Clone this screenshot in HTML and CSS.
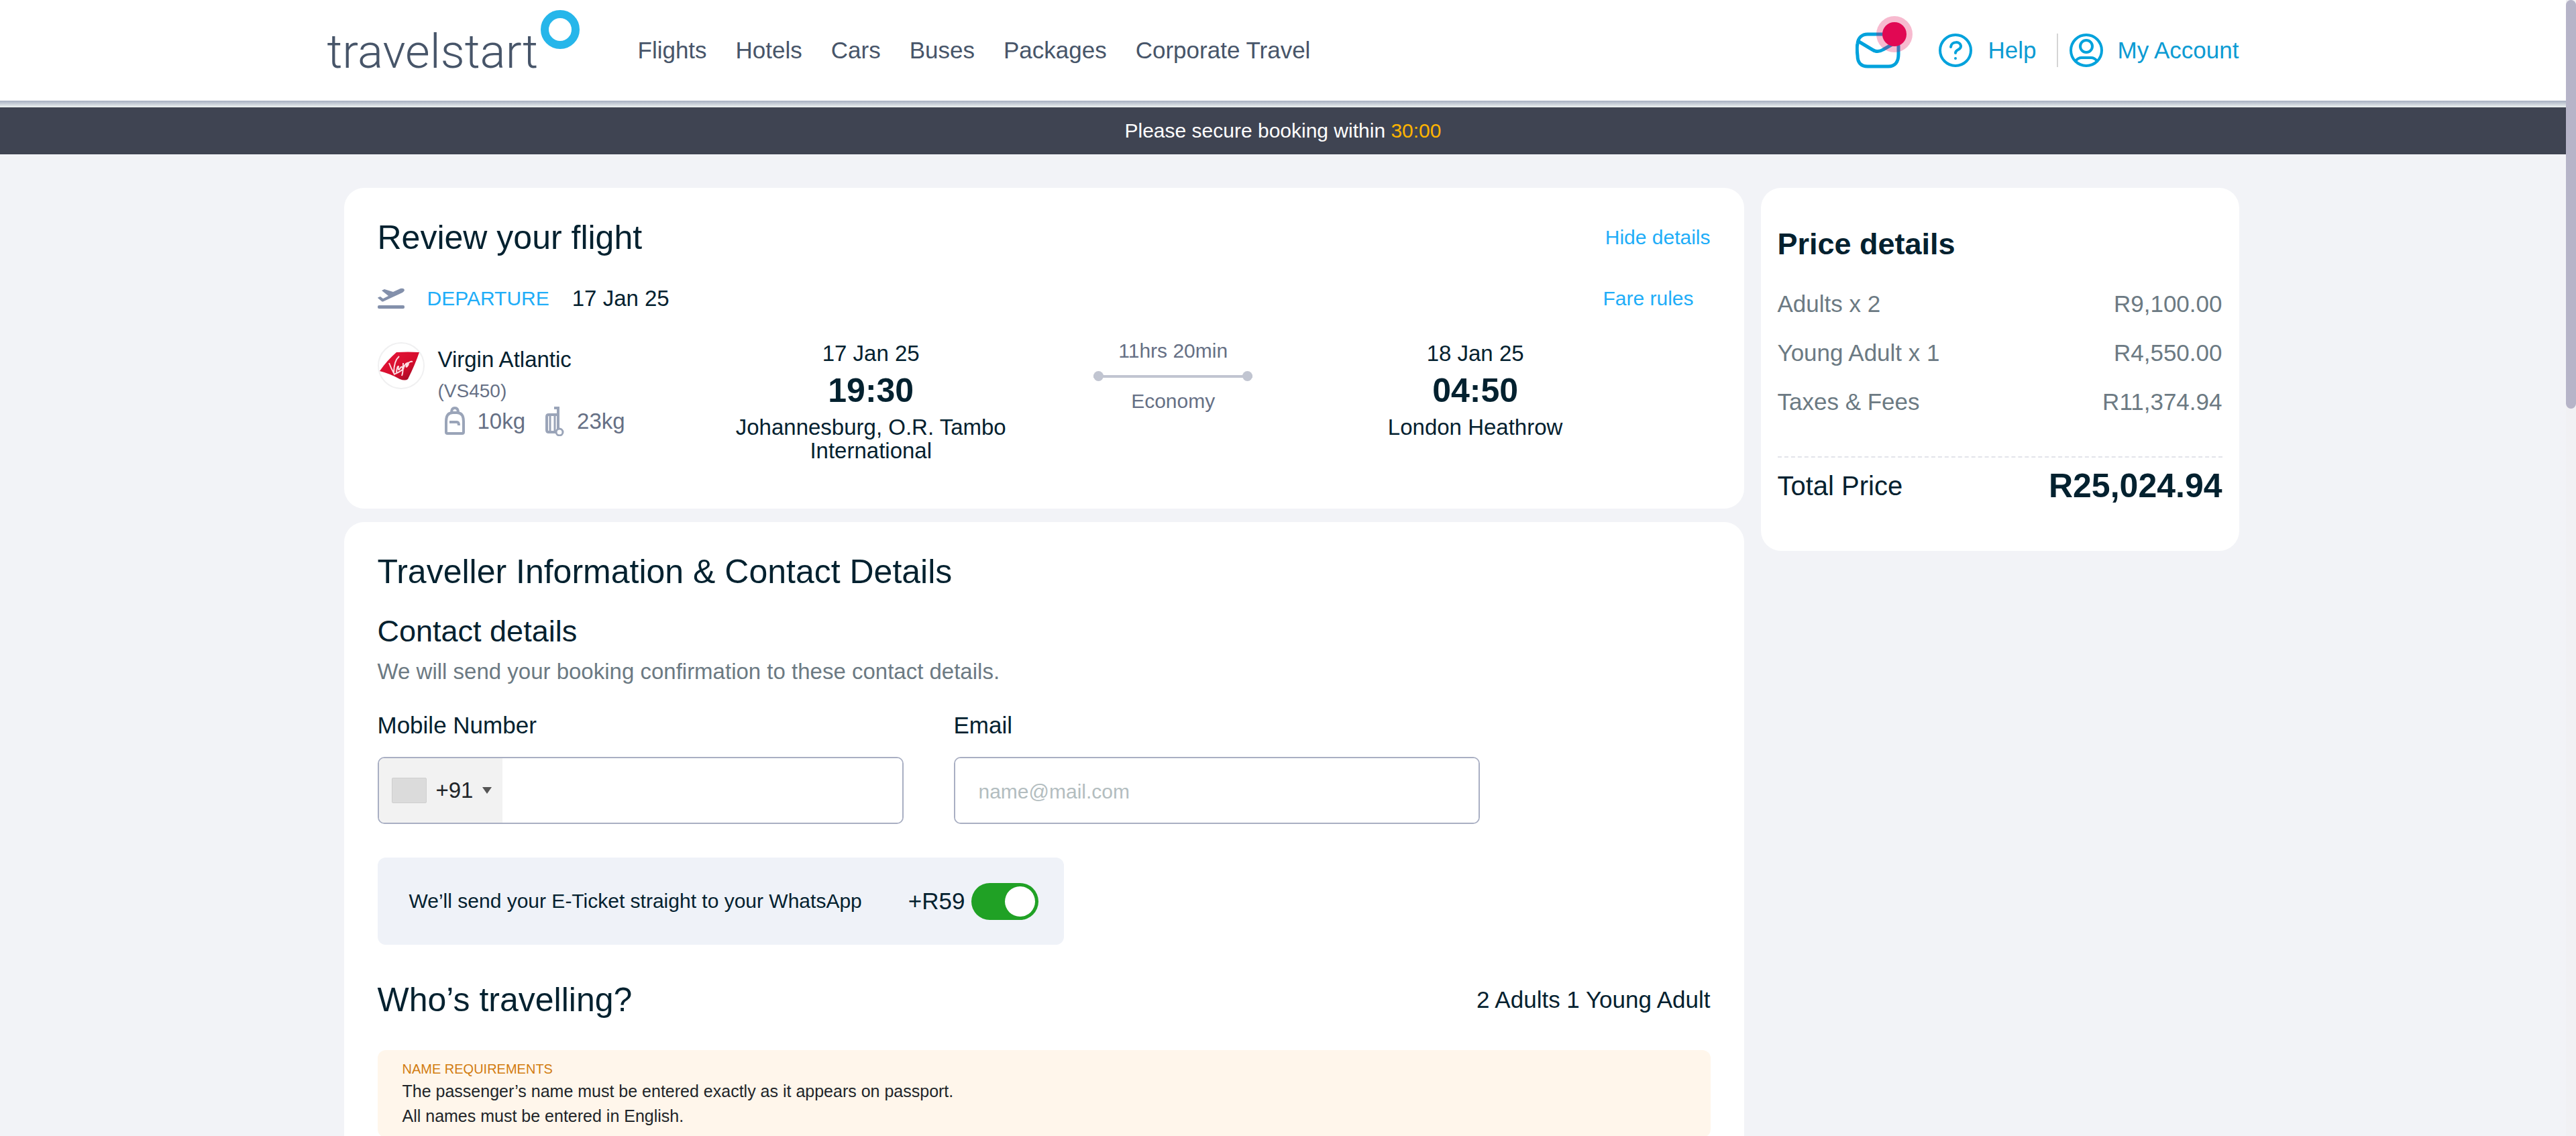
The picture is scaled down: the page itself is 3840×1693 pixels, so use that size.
FILE: index.html
```html
<!DOCTYPE html>
<html lang="en">
<head>
<meta charset="utf-8">
<meta name="viewport" content="width=device-width, initial-scale=1">
<title>Travelstart – Traveller details</title>
<link rel="stylesheet" href="styles.css">
</head>
<body>
<div class="page">
  <header class="header">
    <div class="container header-inner">
      <a class="logo" href="#" aria-label="Travelstart home">
        <span class="logo-text">travelstart</span>
        <svg class="logo-ring" width="58" height="58" viewBox="0 0 58 58" aria-hidden="true"><circle cx="29" cy="29" r="23" fill="none" stroke="#26b6ea" stroke-width="12"/></svg>
      </a>
      <nav class="nav">
        <a href="#">Flights</a>
        <a href="#">Hotels</a>
        <a href="#">Cars</a>
        <a href="#">Buses</a>
        <a href="#">Packages</a>
        <a href="#">Corporate Travel</a>
      </nav>
      <div class="account">
        <a class="mail" href="#" aria-label="Messages">
          <svg width="88" height="80" viewBox="0 0 88 80" aria-hidden="true">
            <path d="M18 28H50C61 28 64 36 64 46V58C64 69 59 76 49 76H18C8 76 3 70 3 60C2 52 2 46 3 42C4 33 10 28 18 28Z" fill="none" stroke="#00a2dc" stroke-width="5"/>
            <path d="M5 39 25 51Q33 56 41 51L62 39" fill="none" stroke="#00a2dc" stroke-width="5"/>
            <circle cx="58" cy="28" r="27" fill="#e10853" fill-opacity=".28"/>
            <circle cx="58" cy="28" r="18" fill="#e10853"/>
          </svg>
        </a>
        <a class="account-link help" href="#">
          <svg width="50" height="50" viewBox="0 0 50 50" fill="none" stroke="#00a2dc" aria-hidden="true">
            <circle cx="25" cy="25" r="23" stroke-width="4"/>
            <path d="M18 20C19 11 33 11 33 19C33 25 25 23 25 29" stroke-width="4" stroke-linecap="round"/>
            <circle cx="25" cy="37" r="2" fill="#00a2dc" stroke="none"/>
          </svg>
          Help
        </a>
        <a class="account-link profile" href="#">
          <svg width="50" height="50" viewBox="0 0 50 50" fill="none" stroke="#00a2dc" stroke-width="4" aria-hidden="true">
            <circle cx="25" cy="25" r="23"/>
            <circle cx="25" cy="19" r="9"/>
            <path d="M9 41C12 37 14 36 18 36H32C36 36 38 37 41 41"/>
          </svg>
          My Account
        </a>
      </div>
    </div>
  </header>
  <p class="timer">Please secure booking within <span class="timer-value">30:00</span></p>

  <div class="container layout">
    <main class="main">
      <section class="card">
        <div class="row">
          <h1 class="title">Review your flight</h1>
          <a class="link" href="#">Hide details</a>
        </div>
        <div class="row departure-row">
          <div class="departure">
            <svg width="40" height="32" viewBox="0 0 40 32" fill="#8390ab" aria-hidden="true">
              <rect x="0" y="26" width="40" height="5" rx="2"/>
              <path d="M1 14 4 13 8 16 16 12 6 4 10 2 23 6 34 1Q39 0 40 3Q40 5 37 7L9 20Q7 21 6 20L0 15Z"/>
            </svg>
            <span class="departure-label">DEPARTURE</span>
            <span>17 Jan 25</span>
          </div>
          <a class="link fare-rules" href="#">Fare rules</a>
        </div>
        <div class="flight">
          <div class="airline">
            <svg class="airline-logo" width="70" height="70" viewBox="0 0 70 70" aria-hidden="true">
              <defs><linearGradient id="tail" x1="0" y1="0" x2="1" y2="1"><stop offset="0" stop-color="#e8163a"/><stop offset=".6" stop-color="#d40c2c"/><stop offset="1" stop-color="#8c0a22"/></linearGradient></defs>
              <circle cx="35" cy="35" r="34" fill="#fff" stroke="#f0f0f1" stroke-width="2"/>
              <path d="M28 15Q45 14 62 15Q56 33 45 55Q41 58 33 55Q19 47 3 43Q14 27 28 15Z" fill="url(#tail)"/>
              <path d="M17 31Q20 39 24 46Q24 28 32 21M28 45Q29 35 31 36Q30 45 34 38Q38 34 37 43Q40 32 44 31Q41 39 44 36Q47 29 45 35M44 33Q48 28 52 29M38 31Q38 45 36 50M24 48Q34 44 39 39" fill="none" stroke="#fbdde2" stroke-width="2"/>
            </svg>
            <div>
              <p class="airline-name">Virgin Atlantic</p>
              <p class="flight-number">(VS450)</p>
              <div class="bags">
                <span class="bag">
                  <svg width="30" height="44" viewBox="0 0 30 44" fill="none" stroke="#9aa4b8" stroke-width="4" aria-hidden="true">
                    <path d="M2 38V22Q2 9 12 9H18Q28 9 28 22V38Q28 40 26 40H4Q2 40 2 38Z"/>
                    <path d="M10 9Q10 2 15 2Q20 2 20 9M7 23H18Q21 23 21 28"/>
                  </svg>
                  10kg
                </span>
                <span class="bag">
                  <svg width="28" height="44" viewBox="0 0 28 44" fill="none" stroke="#9aa4b8" stroke-width="4" aria-hidden="true">
                    <path d="M13 2H19V33M19 12H5Q2 12 2 15V35Q2 38 5 38H16"/>
                    <path d="M7 13V38M14 13V38" stroke-width="3"/>
                    <circle cx="21" cy="38" r="5" stroke-width="3"/>
                  </svg>
                  23kg
                </span>
              </div>
            </div>
          </div>
          <div class="stop">
            <p class="stop-date">17 Jan 25</p>
            <p class="stop-time">19:30</p>
            <p class="stop-city">Johannesburg, O.R. Tambo International</p>
          </div>
          <div class="duration">
            <p>11hrs 20min</p>
            <div class="duration-line"></div>
            <p>Economy</p>
          </div>
          <div class="stop">
            <p class="stop-date">18 Jan 25</p>
            <p class="stop-time">04:50</p>
            <p class="stop-city">London Heathrow</p>
          </div>
        </div>
      </section>

      <section class="card">
        <h2 class="title">Traveller Information &amp; Contact Details</h2>
        <h3 class="subtitle">Contact details</h3>
        <p class="hint">We will send your booking confirmation to these contact details.</p>
        <div class="fields">
          <div class="field">
            <label for="mobile">Mobile Number</label>
            <div class="control">
              <button class="country" type="button" aria-label="Country code +91">
                <span class="flag"></span>
                +91
                <svg width="14" height="10" viewBox="0 0 14 10" aria-hidden="true"><path d="M0 0H14L7 10Z" fill="#555"/></svg>
              </button>
              <input class="input phone" id="mobile" type="tel">
            </div>
          </div>
          <div class="field">
            <label for="email">Email</label>
            <div class="control">
              <input class="input" id="email" type="email" placeholder="name@mail.com">
            </div>
          </div>
        </div>
        <div class="whatsapp">
          <label for="whatsapp">We’ll send your E-Ticket straight to your WhatsApp</label>
          <div class="whatsapp-option">
            <span>+R59</span>
            <input class="toggle" id="whatsapp" type="checkbox" checked>
          </div>
        </div>
        <div class="row travellers">
          <h2 class="title">Who’s travelling?</h2>
          <span>2 Adults 1 Young Adult</span>
        </div>
        <div class="notice">
          <h4 class="notice-title">NAME REQUIREMENTS</h4>
          <p>The passenger’s name must be entered exactly as it appears on passport.</p>
          <p>All names must be entered in English.</p>
        </div>
      </section>
    </main>

    <aside class="price">
      <h2 class="price-title">Price details</h2>
      <table class="price-table">
        <tbody>
          <tr><th scope="row">Adults x 2</th><td>R9,100.00</td></tr>
          <tr><th scope="row">Young Adult x 1</th><td>R4,550.00</td></tr>
          <tr><th scope="row">Taxes &amp; Fees</th><td>R11,374.94</td></tr>
        </tbody>
      </table>
      <div class="row total">
        <span>Total Price</span>
        <strong class="total-value">R25,024.94</strong>
      </div>
    </aside>
  </div>
</div>
<div class="scrollbar" aria-hidden="true"><div class="scrollbar-thumb"></div></div>
</body>
</html>
```
FILE: styles.css
```css
:root {
  --ink: #03212f;
  --muted: #6c7a83;
  --slate: #667085;
  --brand: #0c9bd3;
  --link: #20adf8;
  --page: #f2f3f7;
}

* {
  box-sizing: border-box;
}

body {
  height: 100vh;
  margin: 0;
  overflow: hidden;
  background: var(--page);
  color: var(--ink);
  font: 33px/40px "Liberation Sans", Arial, sans-serif;
}

h1, h2, h3, h4, p {
  margin: 0;
  font-weight: normal;
}

a {
  color: inherit;
  text-decoration: none;
}

svg {
  flex: none;
  display: block;
}

.page {
  margin-right: 15px;
}

.container {
  max-width: 2850px;
  margin: 0 auto;
}

/* Header */

.header {
  padding-bottom: 10px;
  background: linear-gradient(#a6afc1, #eef3f2) bottom / 100% 10px no-repeat #fff;
}

.header-inner {
  display: flex;
  align-items: center;
  height: 150px;
  font-size: 35px;
}

.logo {
  display: flex;
  gap: 4px;
  width: 463px;
  height: 120px;
  color: #475569;
}

.logo-text {
  padding-top: 22px;
  font: 300 71px/80px Roboto, "Liberation Sans", sans-serif;
}

.nav {
  display: flex;
  gap: 43px;
  color: #475569;
  white-space: nowrap;
}

.account {
  display: flex;
  align-items: center;
  margin-left: auto;
  color: var(--brand);
  white-space: nowrap;
}

.account-link {
  display: flex;
  align-items: center;
}

.mail {
  margin-right: 36px;
  padding-bottom: 25px;
}

.help {
  gap: 24px;
  margin-right: 30px;
}

.profile {
  gap: 22px;
  padding-left: 17px;
  border-left: 2px solid #d5d5d5;
}

.timer {
  background: #3f4452;
  color: #fff;
  font-size: 30px;
  line-height: 70px;
  text-align: center;
}

.timer-value {
  color: #ffb400;
}

/* Layout */

.layout {
  display: flex;
  align-items: flex-start;
  gap: 25px;
  padding: 50px 0 0 25px;
}

.main {
  display: grid;
  flex: 1;
  gap: 20px;
  min-width: 0;
}

.card {
  padding: 44px 50px 69px;
  border-radius: 30px;
  background: #fff;
}

.row {
  display: flex;
  align-items: center;
  justify-content: space-between;
}

.title {
  font-size: 50px;
  line-height: 60px;
}

.link {
  color: var(--link);
  font-size: 30px;
}

/* Flight summary */

.departure-row {
  margin-top: 41px;
}

.departure {
  display: flex;
  align-items: center;
  gap: 34px;
}

.departure-label {
  color: var(--link);
  font-size: 30px;
}

.fare-rules {
  margin-right: 25px;
}

.flight {
  display: grid;
  grid-template-columns: 102fr 90fr 90fr 90fr 25fr;
  margin-top: 38px;
}

.airline {
  display: flex;
  align-items: flex-start;
  gap: 20px;
  padding-top: 7px;
}

.airline-name {
  padding-top: 6px;
}

.flight-number {
  margin-top: 12px;
  color: var(--slate);
  font-size: 28px;
  line-height: 30px;
}

.bags {
  display: flex;
  gap: 30px;
  margin-top: 10px;
  padding-left: 10px;
  color: var(--slate);
}

.bag {
  display: flex;
  align-items: center;
  gap: 19px;
  height: 40px;
}

.stop {
  padding: 4px 20px 0;
  text-align: center;
}

.stop-time {
  margin-top: 5px;
  font-size: 50px;
  font-weight: bold;
  line-height: 60px;
}

.stop-city {
  margin-top: 7px;
  line-height: 35px;
}

.duration {
  display: flex;
  flex-direction: column;
  align-items: center;
  gap: 10px;
  color: var(--slate);
  font-size: 30px;
}

.duration-line {
  display: flex;
  align-items: center;
  justify-content: space-between;
  width: 237px;
  height: 15px;
  background: linear-gradient(#c1c5d1, #c1c5d1) center / 100% 4px no-repeat;
}

.duration-line::before,
.duration-line::after {
  content: "";
  width: 15px;
  height: 15px;
  border-radius: 50%;
  background: #c1c5d1;
}

/* Contact details */

.subtitle {
  margin-top: 34px;
  font-size: 45px;
  line-height: 50px;
}

.hint {
  margin-top: 15px;
  color: var(--muted);
}

.fields {
  display: grid;
  grid-template-columns: repeat(2, minmax(0, 784px));
  gap: 75px;
  margin-top: 40px;
}

.field {
  display: grid;
  gap: 27px;
  font-size: 35px;
}

.control {
  display: flex;
  height: 100px;
  overflow: hidden;
  border: 2px solid #a9afc3;
  border-radius: 10px;
}

.country {
  display: flex;
  align-items: center;
  gap: 14px;
  width: 184px;
  padding: 0 0 0 19px;
  border: 0;
  background: #f2f2f2;
  color: #212529;
  font: inherit;
  font-size: 33px;
}

.flag {
  width: 52px;
  height: 38px;
  border: 1px solid #cfcfcf;
  border-radius: 2px;
  background: #dbdbdb;
}

.input {
  flex: 1;
  min-width: 0;
  padding: 4px 35px 0;
  border: 0;
  outline: 0;
  background: #fff;
  color: var(--ink);
  font: inherit;
  font-size: 30px;
}

.input::placeholder {
  color: #b3bdbf;
  opacity: 1;
}

.whatsapp {
  display: flex;
  align-items: center;
  justify-content: space-between;
  max-width: 1023px;
  height: 130px;
  margin-top: 50px;
  padding: 0 38px 0 47px;
  border-radius: 12px;
  background: #eff2f8;
  font-size: 30px;
}

.whatsapp-option {
  display: flex;
  align-items: center;
  gap: 9px;
  font-size: 35px;
}

.toggle {
  display: flex;
  align-items: center;
  justify-content: flex-end;
  width: 100px;
  height: 55px;
  margin: 0;
  padding: 5px;
  appearance: none;
  border-radius: 28px;
  background: #20a125;
}

.toggle::before {
  content: "";
  width: 45px;
  height: 45px;
  border-radius: 50%;
  background: #fff;
}

.travellers {
  margin-top: 52px;
  font-size: 35px;
}

.notice {
  margin-top: 45px;
  padding: 13px 37px;
  border-radius: 12px;
  background: #fff6eb;
  color: #212529;
  font-size: 25px;
  line-height: 37px;
}

.notice-title {
  color: #d27c10;
  font-size: 20px;
  line-height: 30px;
}

/* Price summary */

.price {
  flex: none;
  width: 713px;
  padding: 59px 25px 67px;
  border-radius: 30px;
  background: #fff;
}

.price-title {
  font-size: 45px;
  font-weight: bold;
  line-height: 50px;
}

.price-table {
  width: 100%;
  margin-top: 27px;
  border-collapse: collapse;
  color: var(--muted);
  font-size: 35px;
}

.price-table th,
.price-table td {
  height: 73px;
  padding: 0;
  font-weight: normal;
  text-align: left;
}

.price-table td {
  text-align: right;
}

.total {
  margin-top: 45px;
  padding-top: 12px;
  border-top: 2px dashed #e3e4ea;
  font-size: 40px;
}

.total-value {
  font-size: 50px;
  line-height: 60px;
}

/* Page scrollbar */

.scrollbar {
  position: fixed;
  top: 0;
  right: 0;
  bottom: 0;
  width: 15px;
  background: #f1f1f4;
}

.scrollbar-thumb {
  height: 36%;
  border-radius: 8px;
  background: #b6b4c8;
}
```
